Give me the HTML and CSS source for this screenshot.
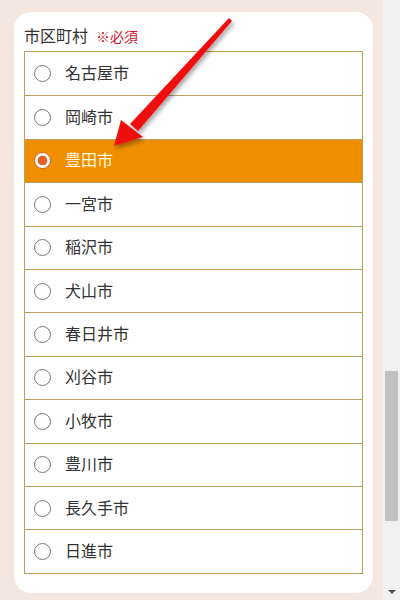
FILE: index.html
```html
<!DOCTYPE html>
<html lang="ja">
<head>
<meta charset="utf-8">
<link rel="stylesheet" href="styles.css">
</head>
<body>
<div class="page">
  <main class="main">
    <section class="card">
      <div class="label">市区町村<span class="req">※必須</span></div>
      <ul class="list">
        <li class="row"><span class="radio"></span><span class="name">名古屋市</span></li>
        <li class="row"><span class="radio"></span><span class="name">岡崎市</span></li>
        <li class="row selected"><span class="radio"></span><span class="name">豊田市</span></li>
        <li class="row"><span class="radio"></span><span class="name">一宮市</span></li>
        <li class="row"><span class="radio"></span><span class="name">稲沢市</span></li>
        <li class="row"><span class="radio"></span><span class="name">犬山市</span></li>
        <li class="row"><span class="radio"></span><span class="name">春日井市</span></li>
        <li class="row"><span class="radio"></span><span class="name">刈谷市</span></li>
        <li class="row"><span class="radio"></span><span class="name">小牧市</span></li>
        <li class="row"><span class="radio"></span><span class="name">豊川市</span></li>
        <li class="row"><span class="radio"></span><span class="name">長久手市</span></li>
        <li class="row"><span class="radio"></span><span class="name">日進市</span></li>
      </ul>
    </section>
    <svg class="arrow" width="400" height="600" viewBox="0 0 400 600">
      <defs>
        <filter id="sh" x="-20%" y="-20%" width="140%" height="140%">
          <feDropShadow dx="2" dy="3" stdDeviation="2" flood-color="#000" flood-opacity="0.35"/>
        </filter>
      </defs>
      <g filter="url(#sh)" fill="#f01010">
        <polygon points="229,18 232,21 138,131 130,124"/>
        <polygon points="114,146 121,120 143,137"/>
      </g>
    </svg>
  </main>
  <div class="scrollbar">
    <div class="track"><div class="thumb"></div></div>
    <div class="down"></div>
  </div>
</div>
</body>
</html>
```
FILE: styles.css
```css
html, body {
  margin: 0;
  padding: 0;
}
body {
  font-family: "Noto Sans CJK JP", "Noto Sans", sans-serif;
  background: #f3e7df;
  color: #333;
}
.page {
  display: flex;
  width: 400px;
  height: 600px;
  overflow: hidden;
}
.main {
  position: relative;
  width: 383px;
  padding: 12px 10px 0 14px;
  box-sizing: border-box;
}
.card {
  background: #fff;
  border-radius: 17px;
  height: 581px;
  padding: 12px 10px 0 10px;
  box-sizing: border-box;
}
.label {
  font-size: 16px;
  line-height: 22px;
  height: 27px;
  color: #333;
}
.req {
  color: #d0142c;
  font-size: 14px;
  margin-left: 8px;
}
.list {
  list-style: none;
  margin: 0;
  padding: 0;
  border: 1px solid #b9a05c;
  width: 339px;
  box-sizing: border-box;
}
.row {
  display: flex;
  align-items: center;
  height: 43.4px;
  box-sizing: border-box;
  border-top: 1px solid #b9a05c;
  padding-left: 9px;
  font-size: 16px;
}
.row:first-child {
  border-top: none;
}
.radio {
  width: 17px;
  height: 17px;
  box-sizing: border-box;
  border: 1px solid #767676;
  border-radius: 50%;
  background: #fff;
  flex: none;
}
.name {
  margin-left: 14px;
  margin-bottom: 3px;
  color: #333;
}
.selected {
  background: #ef8f00;
}
.selected .name {
  color: #fff6dc;
}
.selected .radio {
  border: 1px solid #c46a2a;
  background: radial-gradient(circle, #e0602a 0 4.5px, #fff 5.2px);
}
.arrow {
  position: absolute;
  left: 0;
  top: 0;
  pointer-events: none;
}
.scrollbar {
  width: 17px;
  background: #f1f1f1;
  display: flex;
  flex-direction: column;
}
.track {
  flex: 1;
  padding-top: 371px;
  box-sizing: border-box;
}
.thumb {
  margin: 0 2px;
  height: 150px;
  background: #c1c1c1;
}
.down {
  height: 17px;
  display: flex;
  justify-content: center;
  align-items: center;
}
.down::before {
  content: "";
  width: 0;
  height: 0;
  border-left: 4px solid transparent;
  border-right: 4px solid transparent;
  border-top: 4px solid #505050;
}
```
